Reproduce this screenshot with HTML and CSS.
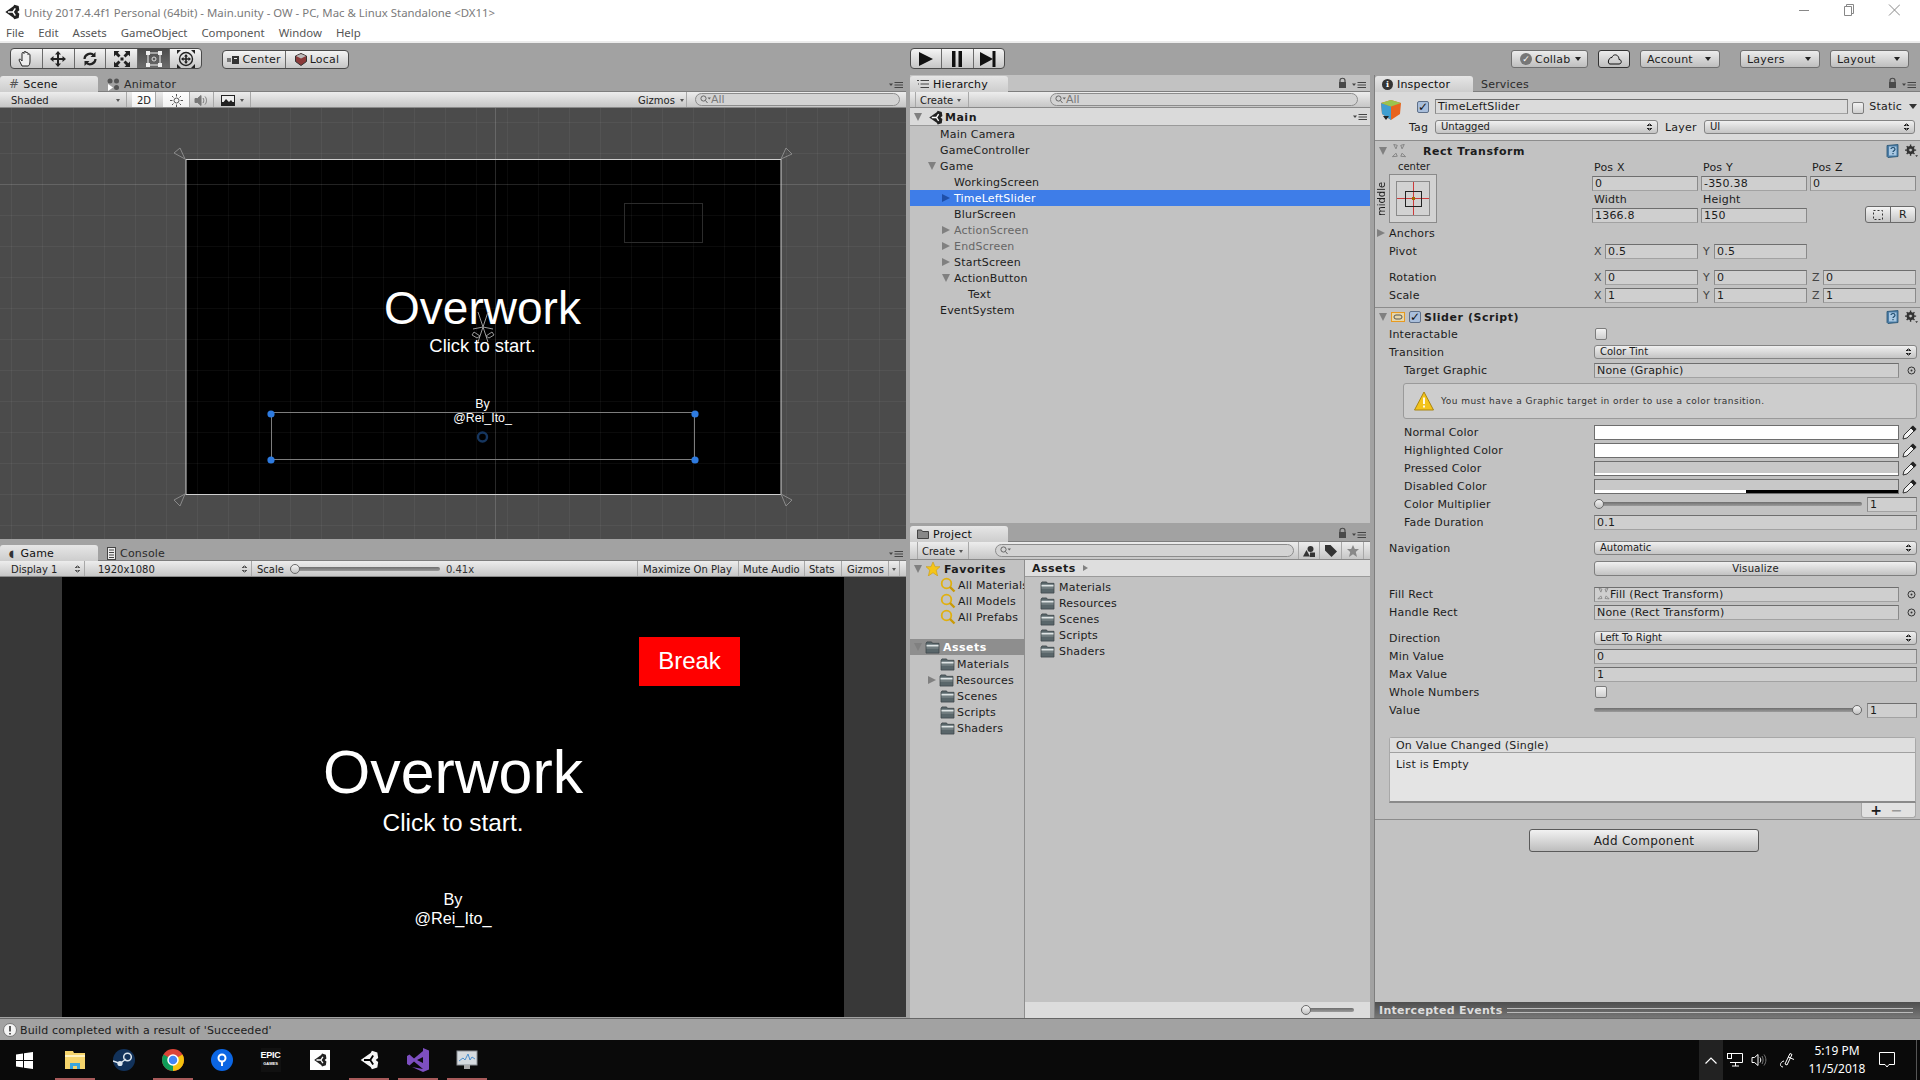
FILE: index.html
```html
<!DOCTYPE html>
<html lang="en">
<head>
    <meta charset="UTF-8">
    <title>Unity 2017.4.4f1 Personal (64bit) - Main.unity - OW</title>
    <link rel="stylesheet" href="styles.css">
</head>
<body>
<svg class="defs" width="0" height="0">
    <defs>
        <symbol id="unity" viewBox="0 0 24 24">
            <path d="M2 12 14 3.5 15.5 1 22 3 23 9.5 20 12 23 14.5 22 21 15.5 23 14 20.500z" fill="currentColor"/>
            <path d="M6 12H13.500L17 6.500M13.500 12 17 17.500" fill="none" stroke="#fff" stroke-width="2.200"/>
        </symbol>
        <symbol id="folder" viewBox="0 0 16 14">
            <path d="M1 2.500 2 1H7L8 2.500H15V13H1z" fill="#59666a" stroke="#3c4447" stroke-width=".8"/>
            <path d="M1.500 4H14.500V6H1.500z" fill="#dfe4e5"/>
            <path d="M1.500 7H14.500V8H1.500z" fill="#8c9699"/>
        </symbol>
        <symbol id="mag" viewBox="0 0 16 16">
            <circle cx="6.500" cy="6.500" r="4.800" fill="none" stroke="#e0b010" stroke-width="1.800"/>
            <path d="M10 10 14.500 14.500" stroke="#c99a08" stroke-width="2.400"/>
        </symbol>
        <symbol id="gear" viewBox="0 0 14 14">
            <circle cx="6" cy="6" r="3.200" fill="none" stroke="#333" stroke-width="2.200"/>
            <path d="M6 0V12M0 6H12M1.800 1.800 10.200 10.200M10.200 1.800 1.800 10.200" stroke="#333" stroke-width="1.500"/>
            <circle cx="6" cy="6" r="1.500" fill="#c2c2c2"/>
            <path d="M11 11.500H14L12.500 13.500z" fill="#333"/>
        </symbol>
        <symbol id="book" viewBox="0 0 14 14">
            <path d="M1 1.500 12 .5V12.500L2 13.500 1 12.500z" fill="#4d7ea8" stroke="#25506f" stroke-width=".8"/>
            <path d="M3 2.500H10.500V11.500H3z" fill="#a9c8e2"/>
            <path d="M5 5C5 3 9 3 9 5.200 9 6.800 7 6.500 7 8M7 9V10.300" fill="none" stroke="#1e4a6b" stroke-width="1.200"/>
        </symbol>
        <symbol id="rect-ico" viewBox="0 0 16 16">
            <g fill="none" stroke="#7d7d7d">
                <path d="M2 .5 6 1.500 4.500 5.500z"/>
                <path d="M14 .5 10 1.500 11.500 5.500z"/>
                <path d="M.5 14.500 4.500 10.500 6 14z"/>
                <path d="M15.500 14.500 11.500 10.500 10 14z"/>
            </g>
        </symbol>
        <symbol id="dropper" viewBox="0 0 15 15">
            <path d="M1 14 2 10 9 3 12 6 5 13z" fill="#f2f2f2" stroke="#333"/>
            <path d="M8.500 2.500 11 0.500 14.500 4 12.500 6.500z" fill="#222"/>
        </symbol>
        <symbol id="picker" viewBox="0 0 9 9">
            <circle cx="4.500" cy="4.500" r="3.500" fill="none" stroke="#333" stroke-width="1"/>
            <circle cx="4.500" cy="4.500" r="1" fill="#333"/>
        </symbol>
        <symbol id="lock" viewBox="0 0 9 12">
            <path d="M2 5V3.500C2 .5 7 .5 7 3.500V5" fill="none" stroke="#4a4a4a" stroke-width="1.200"/>
            <rect x="1" y="5" width="7" height="6" fill="#4a4a4a"/>
        </symbol>
        <symbol id="dock-menu" viewBox="0 0 14 8">
            <path d="M0 2.500H4L2 5z" fill="#444"/>
            <path d="M5.500 1.500H14M5.500 4H14M5.500 6.500H14" stroke="#444"/>
        </symbol>
        <symbol id="search" viewBox="0 0 11 9">
            <circle cx="3.500" cy="3.500" r="2.600" fill="none" stroke="#666"/>
            <path d="M5.500 5.500 7.500 8" stroke="#666"/>
            <path d="M7.500 2.500H11L9.250 4.500z" fill="#666"/>
        </symbol>
    </defs>
</svg>

<div class="titlebar">
    <svg class="title-logo" width="16" height="16"><use href="#unity"/></svg>
    <span class="title-text">Unity 2017.4.4f1 Personal (64bit) - Main.unity - OW - PC, Mac &amp; Linux Standalone &lt;DX11&gt;</span>
    <div class="win-controls">
        <svg width="101" height="12" viewBox="0 0 101 12" fill="none" stroke="#888">
            <path d="M0 6.500H10"/>
            <path d="M45.500 2.500H52.500V11.500H45.500zM47.500 2.500V.5H54.500V9.500H52.500"/>
            <path d="M90 .5 101 11.500M101 .5 90 11.500"/>
        </svg>
    </div>
</div>
<div class="menubar">
    <span>File</span><span>Edit</span><span>Assets</span><span>GameObject</span><span>Component</span><span>Window</span><span>Help</span>
</div>

<div class="toolbar">
    <div class="btn-group tools">
        <button class="tool">
            <svg width="18" height="18" viewBox="0 0 18 18" fill="#eee" stroke="#222"><path d="M5 16 2 10C2 8.500 4 9 5 11V3.500C5 2 7 2 7 3.500V2.500C7 1 9 1 9 2.500V3C9 2 11 2 11 3.500V4.500C11 3.500 13 3.500 13 5V11C13 14 12 16 11 16z"/></svg>
        </button>
        <button class="tool">
            <svg width="18" height="18" viewBox="0 0 18 18" fill="#222"><path d="M9 1 12 4.500H10V8H13.500V6L17 9 13.500 12V10H10V13.500H12L9 17 6 13.500H8V10H4.500V12L1 9 4.500 6V8H8V4.500H6z"/></svg>
        </button>
        <button class="tool">
            <svg width="18" height="18" viewBox="0 0 18 18" fill="none" stroke="#222" stroke-width="2.200"><path d="M3.500 9A5.500 5.500 0 0 1 13 5.500M14.500 9A5.500 5.500 0 0 1 5 12.500"/><path d="M14.500 2V7H9.500z" fill="#222" stroke="none"/><path d="M3.500 16V11H8.500z" fill="#222" stroke="none"/></svg>
        </button>
        <button class="tool">
            <svg width="18" height="18" viewBox="0 0 18 18" fill="#222"><path d="M1 1H6.500L4.800 2.700 7.500 5.500 5.500 7.500 2.700 4.800 1 6.500zM17 1V6.500L15.300 4.800 12.500 7.500 10.500 5.500 13.200 2.700 11.500 1zM1 17V11.500L2.700 13.200 5.500 10.500 7.500 12.500 4.800 15.300 6.500 17zM17 17H11.500L13.200 15.300 10.500 12.500 12.500 10.500 15.300 13.200 17 11.500z"/><rect x="7.500" y="7.500" width="3" height="3"/></svg>
        </button>
        <button class="tool active">
            <svg width="18" height="18" viewBox="0 0 18 18"><rect x="3" y="3" width="12" height="12" fill="none" stroke="#ddd" stroke-width="1.200"/><g fill="#eee"><rect x="1" y="1" width="4" height="4"/><rect x="13" y="1" width="4" height="4"/><rect x="1" y="13" width="4" height="4"/><rect x="13" y="13" width="4" height="4"/></g><circle cx="9" cy="9" r="2" fill="none" stroke="#ddd"/></svg>
        </button>
        <button class="tool">
            <svg width="20" height="20" viewBox="0 0 20 20" fill="#222"><path d="M1 5V1H5zM19 5V1H15zM1 15V19H5zM19 15V19H15z"/><circle cx="10" cy="10" r="6.500" fill="none" stroke="#222" stroke-width="1.400"/><path d="M10 5 12 7.500H10.800V9.200H12.500V8L15 10 12.500 12V10.800H10.800V12.500H12L10 15 8 12.500H9.200V10.800H7.500V12L5 10 7.500 8V9.200H9.200V7.500H8z"/></svg>
        </button>
    </div>
    <div class="btn-group pivot">
        <button class="tool-text">
            <svg width="12" height="8" viewBox="0 0 12 8"><rect x="0" y="2" width="4" height="4" fill="#777"/><rect x="5" y="0" width="7" height="8" fill="#333"/><rect x="7" y="2" width="3" height="1" fill="#eee"/></svg>
            Center
        </button>
        <button class="tool-text">
            <svg width="12" height="13" viewBox="0 0 12 13"><path d="M6 .5 11.500 3V8.500L6 12.500 .5 8.500V3z" fill="#8b3a3a" stroke="#333"/><path d="M1 3 6 5.500 11 3 6 1z" fill="#bbb"/></svg>
            Local
        </button>
    </div>
    <div class="btn-group play">
        <button class="play-btn"><svg width="16" height="16" viewBox="0 0 16 16"><path d="M1 1 15 8 1 15z" fill="#111"/></svg></button>
        <button class="play-btn"><svg width="12" height="16" viewBox="0 0 12 16" fill="#111"><rect x="1" width="3.500" height="16"/><rect x="7.500" width="3.500" height="16"/></svg></button>
        <button class="play-btn"><svg width="17" height="16" viewBox="0 0 17 16" fill="#111"><path d="M0 1 13 8 0 15z"/><rect x="12.500" width="3" height="16"/></svg></button>
    </div>
    <div class="toolbar-right">
        <button class="drop collab"><i class="collab-dot">&#10003;</i>Collab <i class="arrow"></i></button>
        <button class="drop cloud"><svg width="15" height="12" viewBox="0 0 15 12" fill="none" stroke="#111"><path d="M3 11H12C15 11 15 6.500 12 6.500 12 1 6 .5 5 4.500 1.500 4 0 11 3 11z"/></svg></button>
        <button class="drop account">Account<i class="arrow"></i></button>
        <button class="drop layers">Layers<i class="arrow"></i></button>
        <button class="drop layout">Layout<i class="arrow"></i></button>
    </div>
</div>

<div class="workspace">
    <div class="col col-views">
        <section class="panel scene-panel">
            <div class="tabs">
                <div class="tab"><span class="tab-glyph">#</span>Scene</div>
                <div class="tab off">
                    <svg width="13" height="13" viewBox="0 0 13 13" fill="#555"><circle cx="3" cy="3" r="2.500"/><circle cx="9.500" cy="3" r="2.500"/><circle cx="9.500" cy="9.500" r="2.500"/><path d="M1 6 6 9.500 1 13z" fill="#fff"/></svg>
                    Animator
                </div>
                <svg class="dock-menu" width="14" height="8"><use href="#dock-menu"/></svg>
            </div>
            <div class="strip">
                <div class="strip-item shaded">Shaded<i class="arrow small"></i></div>
                <div class="strip-item on two-d">2D</div>
                <div class="strip-item on light">
                    <svg width="13" height="13" viewBox="0 0 13 13" stroke="#555" fill="none"><circle cx="6.500" cy="6.500" r="2.500"/><path d="M6.500 0V2.500M6.500 10.500V13M0 6.500H2.500M10.500 6.500H13M2 2 3.500 3.500M9.500 9.500 11 11M11 2 9.500 3.500M3.500 9.500 2 11"/></svg>
                </div>
                <div class="strip-item audio">
                    <svg width="15" height="13" viewBox="0 0 15 13" fill="#777" stroke="#777"><path d="M1 4.500H3.500L7 1.500V11.500L3.500 8.500H1z"/><path d="M9 4C10 5.500 10 7.500 9 9M11 2.500C13 5 13 8 11 10.500" fill="none"/></svg>
                </div>
                <div class="strip-item image">
                    <svg width="14" height="11" viewBox="0 0 14 11"><rect width="14" height="11" fill="#222"/><rect x="1" y="1" width="12" height="6" fill="#eee"/><path d="M1 9 5 4 8 7 10 5 13 9z" fill="#222"/></svg>
                    <i class="arrow small"></i>
                </div>
                <div class="strip-space"></div>
                <div class="strip-item gizmos">Gizmos<i class="arrow small"></i></div>
                <div class="search scene-search"><svg width="11" height="9"><use href="#search"/></svg>All</div>
            </div>
            <div class="scene-view">
                <svg width="906" height="431" viewBox="0 108 906 431">
                    <defs>
                        <pattern id="grid" x="-20" y="91" width="31" height="31" patternUnits="userSpaceOnUse">
                            <path d="M.5 0V31M0 .5H31" stroke="#fff" stroke-opacity=".045" fill="none"/>
                        </pattern>
                    </defs>
                    <rect x="0" y="108" width="906" height="431" fill="#4b4b4b"/>
                    <rect x="186" y="159" width="595" height="335" fill="#000"/>
                    <rect x="0" y="108" width="906" height="431" fill="url(#grid)"/>
                    <path d="M495.500 108V539" stroke="#fff" stroke-opacity=".16"/>
                    <path d="M0 184.500H906" stroke="#fff" stroke-opacity=".1"/>
                    <rect x="186" y="159.500" width="595" height="335" fill="none" stroke="#cfcfcf"/>
                    <rect x="624.500" y="203.500" width="78" height="39" fill="none" stroke="#2c2c2c"/>
                    <g fill="none" stroke="#8a8a8a">
                        <path d="M185 159 174 153 180 148z"/>
                        <path d="M781 159 786 148 792 154z"/>
                        <path d="M185 494 174 500 180 506z"/>
                        <path d="M781 494 792 500 786 506z"/>
                    </g>
                    <text class="sv-title" x="482.500" y="324">Overwork</text>
                    <text class="sv-sub" x="482.500" y="352">Click to start.</text>
                    <text class="sv-by" x="482.500" y="408">By</text>
                    <text class="sv-by" x="482.500" y="422">@Rei_Ito_</text>
                    <g fill="none" stroke="#9a9a9a">
                        <path d="M478 312 483 327 488 312M478 342 483 327 488 342M473 329 483 327 493 329" />
                        <path d="M474 332 480 336 477 338 472 335zM492 332 486 336 489 338 494 335z"/>
                    </g>
                    <rect x="271.500" y="412.500" width="423" height="47" fill="none" stroke="#7d7d7d"/>
                    <circle cx="482.500" cy="437" r="4.500" fill="none" stroke="#16365f" stroke-width="2.400"/>
                    <g fill="#2e7be0">
                        <circle cx="271" cy="414" r="3.600"/>
                        <circle cx="695" cy="414" r="3.600"/>
                        <circle cx="271" cy="460" r="3.600"/>
                        <circle cx="695" cy="460" r="3.600"/>
                    </g>
                </svg>
            </div>
        </section>
        <section class="panel game-panel">
            <div class="tabs">
                <div class="tab game-tab"><span class="tab-glyph pac">&#9686;</span>Game</div>
                <div class="tab off">
                    <svg width="9" height="13" viewBox="0 0 9 13" fill="none" stroke="#444"><rect x=".5" y=".5" width="8" height="12" fill="#eee"/><path d="M2 3H7M2 5.500H7M2 8H7M2 10.500H7"/></svg>
                    Console
                </div>
                <svg class="dock-menu" width="14" height="8"><use href="#dock-menu"/></svg>
            </div>
            <div class="strip game-strip">
                <div class="strip-item display">Display 1<i class="updown"></i></div>
                <div class="strip-item res">1920x1080<i class="updown"></i></div>
                <div class="scale">
                    <span>Scale</span>
                    <div class="slider scale-slider"><i class="thumb start"></i></div>
                    <span class="scale-val">0.41x</span>
                </div>
                <div class="strip-item max-play">Maximize On Play</div>
                <div class="strip-item mute">Mute Audio</div>
                <div class="strip-item stats">Stats</div>
                <div class="strip-item game-giz">Gizmos</div>
                <div class="strip-item game-giz-arrow"><i class="arrow small"></i></div>
            </div>
            <div class="game-view">
                <div class="game-canvas">
                    <div class="g-title">Overwork</div>
                    <div class="g-sub">Click to start.</div>
                    <div class="g-by">By<br>@Rei_Ito_</div>
                    <div class="g-break">Break</div>
                </div>
            </div>
        </section>
    </div>

    <div class="col col-mid">
        <section class="panel hierarchy">
            <div class="tabs">
                <div class="tab wide">
                    <svg width="12" height="10" viewBox="0 0 12 10" stroke="#444"><path d="M3.500 1.500H12M3.500 5H12M3.500 8.500H12M0 1.500H2M1 5H2"/></svg>
                    Hierarchy
                </div>
                <svg class="lock" width="9" height="12"><use href="#lock"/></svg>
                <svg class="dock-menu near" width="14" height="8"><use href="#dock-menu"/></svg>
            </div>
            <div class="strip">
                <div class="strip-item create">Create<i class="arrow small"></i></div>
                <div class="search hier-search"><svg width="11" height="9"><use href="#search"/></svg>All</div>
            </div>
            <div class="scene-head">
                <i class="tri-d"></i>
                <svg class="scene-logo" width="15" height="15"><use href="#unity"/></svg>
                <b>Main</b>
                <svg class="dock-menu head" width="14" height="8"><use href="#dock-menu"/></svg>
            </div>
            <div class="tree">
                <div class="row d0">Main Camera</div>
                <div class="row d0">GameController</div>
                <div class="row d0"><i class="tri-d"></i>Game</div>
                <div class="row d1">WorkingScreen</div>
                <div class="row d1 selected"><i class="tri-r"></i>TimeLeftSlider</div>
                <div class="row d1">BlurScreen</div>
                <div class="row d1 dim"><i class="tri-r"></i>ActionScreen</div>
                <div class="row d1 dim"><i class="tri-r"></i>EndScreen</div>
                <div class="row d1"><i class="tri-r"></i>StartScreen</div>
                <div class="row d1"><i class="tri-d"></i>ActionButton</div>
                <div class="row d2">Text</div>
                <div class="row d0">EventSystem</div>
            </div>
        </section>
        <section class="panel project">
            <div class="tabs">
                <div class="tab wide">
                    <svg width="12" height="10" viewBox="0 0 12 10" fill="#888" stroke="#444"><path d="M.5 1H4.500L5.500 2.500H11.500V9.500H.5z"/></svg>
                    Project
                </div>
                <svg class="lock" width="9" height="12"><use href="#lock"/></svg>
                <svg class="dock-menu near" width="14" height="8"><use href="#dock-menu"/></svg>
            </div>
            <div class="strip project-strip">
                <div class="strip-item create">Create<i class="arrow small"></i></div>
                <div class="search proj-search"><svg width="11" height="9"><use href="#search"/></svg></div>
                <div class="strip-item icon-cell">
                    <svg width="12" height="11" viewBox="0 0 12 11" fill="#333"><circle cx="7.500" cy="3" r="3"/><path d="M3.500 4 7 10.500H0z"/><rect x="7" y="6.500" width="5" height="4.500"/></svg>
                </div>
                <div class="strip-item icon-cell">
                    <svg width="12" height="12" viewBox="0 0 12 12" fill="#333"><path d="M0 0H5.500L12 6.500 6.500 12 0 5.500z"/></svg>
                </div>
                <div class="strip-item icon-cell">
                    <svg width="12" height="12" viewBox="0 0 12 12" fill="#888"><path d="M6 0 7.800 4H12L8.800 7 10 12 6 9.200 2 12 3.200 7 0 4H4.200z"/></svg>
                </div>
            </div>
            <div class="project-body">
                <div class="proj-tree">
                    <div class="row p-head fav"><i class="tri-d"></i>
                        <svg width="14" height="14" viewBox="0 0 12 12"><path d="M6 0 7.800 4H12L8.800 7 10 12 6 9.200 2 12 3.200 7 0 4H4.200z" fill="#f5c518" stroke="#c89a10" stroke-width=".5"/></svg>
                        <b>Favorites</b></div>
                    <div class="row p-item"><svg width="16" height="16"><use href="#mag"/></svg>All Materials</div>
                    <div class="row p-item"><svg width="16" height="16"><use href="#mag"/></svg>All Models</div>
                    <div class="row p-item"><svg width="16" height="16"><use href="#mag"/></svg>All Prefabs</div>
                    <div class="row p-head assets-sel"><i class="tri-d"></i>
                        <svg width="15" height="13"><use href="#folder"/></svg>
                        <b>Assets</b></div>
                    <div class="row p-item"><svg width="15" height="13"><use href="#folder"/></svg>Materials</div>
                    <div class="row p-item"><i class="tri-r"></i><svg width="15" height="13"><use href="#folder"/></svg>Resources</div>
                    <div class="row p-item"><svg width="15" height="13"><use href="#folder"/></svg>Scenes</div>
                    <div class="row p-item"><svg width="15" height="13"><use href="#folder"/></svg>Scripts</div>
                    <div class="row p-item"><svg width="15" height="13"><use href="#folder"/></svg>Shaders</div>
                </div>
                <div class="proj-files">
                    <div class="crumbs"><b>Assets</b><i class="tri-r tiny"></i></div>
                    <div class="files">
                        <div class="row file"><svg width="15" height="13"><use href="#folder"/></svg>Materials</div>
                        <div class="row file"><svg width="15" height="13"><use href="#folder"/></svg>Resources</div>
                        <div class="row file"><svg width="15" height="13"><use href="#folder"/></svg>Scenes</div>
                        <div class="row file"><svg width="15" height="13"><use href="#folder"/></svg>Scripts</div>
                        <div class="row file"><svg width="15" height="13"><use href="#folder"/></svg>Shaders</div>
                    </div>
                    <div class="files-foot"><div class="slider foot-slider"><i class="thumb start"></i></div></div>
                </div>
            </div>
        </section>
    </div>

    <div class="col col-insp">
        <section class="panel inspector">
            <div class="tabs">
                <div class="tab wide">
                    <span class="info-dot">i</span>
                    Inspector
                </div>
                <div class="tab off services">Services</div>
                <svg class="lock" width="9" height="12"><use href="#lock"/></svg>
                <svg class="dock-menu near" width="14" height="8"><use href="#dock-menu"/></svg>
            </div>
            <div class="insp-head">
                <div class="head-row1">
                    <svg class="cube" width="22" height="22" viewBox="0 0 22 22">
                        <path d="M11 1 21 4 20 15 11 21 2 15 1 4z" fill="#e8631e"/>
                        <path d="M1 4 11 7.500 11 21 2 15z" fill="#3f9ed0"/>
                        <path d="M1 4 11 1 21 4 11 7.500z" fill="#9ac44e"/>
                        <path d="M3 17H9L6 21z" fill="#222"/>
                    </svg>
                    <label class="check on">&#10003;</label>
                    <div class="field name">TimeLeftSlider</div>
                    <label class="check static-check"></label>
                    <span class="static">Static</span>
                    <i class="tri-d dark"></i>
                </div>
                <div class="head-row2">
                    <span class="tag-label">Tag</span>
                    <div class="pop tag-pop">Untagged</div>
                    <span class="layer-label">Layer</span>
                    <div class="pop layer-pop">UI</div>
                </div>
            </div>

            <div class="comp-title rect-title">
                <i class="tri-d"></i>
                <svg class="comp-ico" width="16" height="14"><use href="#rect-ico"/></svg>
                <b class="rect-name">Rect Transform</b>
                <svg class="book" width="14" height="14"><use href="#book"/></svg>
                <svg class="gear" width="13" height="14"><use href="#gear"/></svg>
            </div>
            <div class="rt-top">
                <div class="anchor">
                    <div class="anchor-middle">middle</div>
                    <div class="anchor-col">
                        <div class="anchor-center">center</div>
                        <div class="anchor-box">
                            <svg width="46" height="47" viewBox="0 0 46 47">
                                <rect x="6.500" y="6.500" width="33" height="34" fill="none" stroke="#8a8a8a"/>
                                <path d="M7 23.500H39M23.500 7V40" stroke="#cc3a3a"/>
                                <rect x="15.500" y="16.500" width="16" height="15" fill="none" stroke="#222"/>
                                <rect x="22" y="22" width="3" height="3" fill="#a06a00"/>
                            </svg>
                        </div>
                    </div>
                </div>
                <div class="rt-grid">
                    <span>Pos X</span><span>Pos Y</span><span>Pos Z</span>
                    <div class="field">0</div><div class="field">-350.38</div><div class="field">0</div>
                    <span>Width</span><span>Height</span><span></span>
                    <div class="field">1366.8</div><div class="field">150</div>
                    <div class="btn-group rt-btns">
                        <button class="rt-btn"><svg width="10" height="10" viewBox="0 0 10 10" fill="none" stroke="#333" stroke-dasharray="2 2"><rect x=".5" y=".5" width="9" height="9"/></svg></button>
                        <button class="rt-btn">R</button>
                    </div>
                </div>
            </div>
            <div class="prop foldable"><span class="prop-label"><i class="tri-r"></i>Anchors</span></div>
            <div class="prop">
                <span class="prop-label">Pivot</span>
                <div class="vec">
                    <div class="axis"><span>X</span><div class="field">0.5</div></div>
                    <div class="axis"><span>Y</span><div class="field">0.5</div></div>
                </div>
            </div>
            <div class="prop gap">
                <span class="prop-label">Rotation</span>
                <div class="vec">
                    <div class="axis"><span>X</span><div class="field">0</div></div>
                    <div class="axis"><span>Y</span><div class="field">0</div></div>
                    <div class="axis"><span>Z</span><div class="field">0</div></div>
                </div>
            </div>
            <div class="prop">
                <span class="prop-label">Scale</span>
                <div class="vec">
                    <div class="axis"><span>X</span><div class="field">1</div></div>
                    <div class="axis"><span>Y</span><div class="field">1</div></div>
                    <div class="axis"><span>Z</span><div class="field">1</div></div>
                </div>
            </div>

            <div class="comp-title slider-title">
                <i class="tri-d"></i>
                <svg class="script-ico" width="14" height="10" viewBox="0 0 14 10"><rect x=".5" y=".5" width="13" height="9" fill="#e8d7a8" stroke="#e89a20"/><rect x="3" y="3" width="8" height="4" rx="2" fill="none" stroke="#555"/></svg>
                <label class="check on">&#10003;</label>
                <b>Slider (Script)</b>
                <svg class="book" width="14" height="14"><use href="#book"/></svg>
                <svg class="gear" width="13" height="14"><use href="#gear"/></svg>
            </div>
            <div class="prop"><span class="prop-label">Interactable</span><label class="check"></label></div>
            <div class="prop"><span class="prop-label">Transition</span><div class="pop">Color Tint</div></div>
            <div class="prop nested"><span class="prop-label">Target Graphic</span>
                <div class="obj"><div class="field">None (Graphic)</div><svg width="9" height="9"><use href="#picker"/></svg></div>
            </div>
            <div class="help-box">
                <svg width="20" height="20" viewBox="0 0 20 20"><path d="M10 1 19.500 19H.5z" fill="#f3c31a" stroke="#a98510"/><path d="M10 6.500V13M10 14.500V16.500" stroke="#fff" stroke-width="1.800"/></svg>
                <span>You must have a Graphic target in order to use a color transition.</span>
            </div>
            <div class="prop nested"><span class="prop-label">Normal Color</span>
                <div class="obj"><div class="swatch white"></div><svg class="dropper" width="15" height="15"><use href="#dropper"/></svg></div></div>
            <div class="prop nested"><span class="prop-label">Highlighted Color</span>
                <div class="obj"><div class="swatch white"></div><svg class="dropper" width="15" height="15"><use href="#dropper"/></svg></div></div>
            <div class="prop nested"><span class="prop-label">Pressed Color</span>
                <div class="obj"><div class="swatch pressed"></div><svg class="dropper" width="15" height="15"><use href="#dropper"/></svg></div></div>
            <div class="prop nested"><span class="prop-label">Disabled Color</span>
                <div class="obj"><div class="swatch disabled"></div><svg class="dropper" width="15" height="15"><use href="#dropper"/></svg></div></div>
            <div class="prop nested"><span class="prop-label">Color Multiplier</span>
                <div class="slider-wrap"><div class="slider"><i class="thumb start"></i></div><div class="field num">1</div></div></div>
            <div class="prop nested"><span class="prop-label">Fade Duration</span><div class="field">0.1</div></div>

            <div class="prop gap"><span class="prop-label">Navigation</span><div class="pop">Automatic</div></div>
            <div class="prop visualize"><span></span><button class="btn-plain">Visualize</button></div>

            <div class="prop"><span class="prop-label">Fill Rect</span>
                <div class="obj"><div class="field with-ico"><svg width="13" height="12"><use href="#rect-ico"/></svg>Fill (Rect Transform)</div><svg width="9" height="9"><use href="#picker"/></svg></div></div>
            <div class="prop"><span class="prop-label">Handle Rect</span>
                <div class="obj"><div class="field">None (Rect Transform)</div><svg width="9" height="9"><use href="#picker"/></svg></div></div>

            <div class="prop gap"><span class="prop-label">Direction</span><div class="pop">Left To Right</div></div>
            <div class="prop"><span class="prop-label">Min Value</span><div class="field">0</div></div>
            <div class="prop"><span class="prop-label">Max Value</span><div class="field">1</div></div>
            <div class="prop"><span class="prop-label">Whole Numbers</span><label class="check"></label></div>
            <div class="prop"><span class="prop-label">Value</span>
                <div class="slider-wrap"><div class="slider"><i class="thumb end"></i></div><div class="field num">1</div></div></div>

            <div class="event-box">
                <div class="event-head">On Value Changed (Single)</div>
                <div class="event-body">List is Empty</div>
            </div>
            <div class="event-foot"><span class="plus">+</span><span class="minus">&minus;</span></div>
            <div class="add-wrap"><button class="add-comp">Add Component</button></div>
            <div class="intercepted"><b>Intercepted Events</b><i class="rule"></i></div>
        </section>
    </div>
</div>

<div class="statusbar">
    <svg width="14" height="14" viewBox="0 0 14 14"><circle cx="7" cy="7" r="6.500" fill="#f4f4f4" stroke="#777"/><path d="M7 3V8.500M7 10V11.500" stroke="#333" stroke-width="1.600"/></svg>
    Build completed with a result of 'Succeeded'
</div>

<div class="taskbar">
    <div class="tb-app start">
        <svg width="17" height="17" viewBox="0 0 17 17" fill="#fff"><path d="M0 2.500 7 1.500V8H0zM8 1.300 17 0V8H8zM0 9H7V15.500L0 14.500zM8 9H17V17L8 15.700z"/></svg>
    </div>
    <div class="tb-app on">
        <svg width="22" height="20" viewBox="0 0 22 20"><path d="M1 1H9L10 3H21V19H1z" fill="#f6d56c"/><path d="M1 5H21V7H1z" fill="#fff3c0"/><path d="M6 13H16V19H13V16H9V19H6z" fill="#3aa6dd"/></svg>
    </div>
    <div class="tb-app">
        <svg width="22" height="22" viewBox="0 0 22 22"><circle cx="11" cy="11" r="11" fill="#12325a"/><circle cx="14.500" cy="8" r="3.800" fill="none" stroke="#dde6ee" stroke-width="1.500"/><circle cx="7" cy="14.500" r="2.600" fill="#dde6ee"/><path d="M0 12 7 14.500 13 10" stroke="#dde6ee" stroke-width="1.400" fill="none"/></svg>
    </div>
    <div class="tb-app on">
        <svg width="22" height="22" viewBox="0 0 22 22"><circle cx="11" cy="11" r="11" fill="#db4437"/><path d="M11 11 20.500 5.500A11 11 0 0 1 11 22z" fill="#f4c20d"/><path d="M11 11 11 22A11 11 0 0 1 1.500 5.500z" fill="#0f9d58"/><circle cx="11" cy="11" r="5" fill="#4285f4" stroke="#fff" stroke-width="1.500"/></svg>
    </div>
    <div class="tb-app">
        <svg width="22" height="22" viewBox="0 0 22 22"><circle cx="11" cy="11" r="11" fill="#0b66e4"/><circle cx="11" cy="9" r="3.500" fill="none" stroke="#fff" stroke-width="2"/><path d="M11 12.500V17" stroke="#fff" stroke-width="2"/></svg>
    </div>
    <div class="tb-app">
        <div class="epic">EPIC<small>GAMES</small></div>
    </div>
    <div class="tb-app">
        <div class="unity-tile"><svg width="14" height="14"><use href="#unity"/></svg></div>
    </div>
    <div class="tb-app on unity-dark">
        <svg width="20" height="20"><use href="#unity"/></svg>
    </div>
    <div class="tb-app on">
        <svg width="24" height="24" viewBox="0 0 24 24" fill="#7d4fc0"><path d="M17 0 23 2.500V21.500L17 24 6 19 17 21zM1 8 3.500 6.500 8 10.500 17 3V9L11 12 17 15V21L8 13.500 3.500 17.500 1 16z"/></svg>
    </div>
    <div class="tb-app on">
        <svg width="22" height="22" viewBox="0 0 22 22"><rect x="1" y="2" width="20" height="14" fill="#d6dbdf" stroke="#8b9096"/><path d="M3 12 7 9 9 11 12 5 14 11 16 8 19 10" fill="none" stroke="#4a8fd0"/><path d="M8 16H14V20H8z" fill="#aaa"/></svg>
    </div>
    <div class="tray">
        <div class="tray-up"><svg width="12" height="7" viewBox="0 0 12 7" fill="none" stroke="#fff" stroke-width="1.200"><path d="M.5 6.500 6 1 11.500 6.500"/></svg></div>
        <svg class="tray-net" width="16" height="14" viewBox="0 0 16 14" fill="none" stroke="#fff"><path d="M3 .5H15.500V9.500H3M8.500 9.500V13M5 13H12"/><rect x=".5" y=".5" width="4" height="5" fill="#0a0a0a"/></svg>
        <svg class="tray-vol" width="16" height="14" viewBox="0 0 16 14" fill="none" stroke="#fff"><path d="M1 4.500H3.500L7 1.500V12.500L3.500 9.500H1z"/><path d="M9 4.500C10 6 10 8 9 9.500"/><path d="M11 3C12.500 5.500 12.500 8.500 11 11M13 1.500C15.500 5 15.500 9 13 12.500" stroke="#777"/></svg>
        <svg class="tray-pen" width="16" height="16" viewBox="0 0 16 16" fill="none" stroke="#fff"><path d="M6 12 11 1.500 13 2.500 8 13zM9 5 15 7.500M5 9C.5 10 .5 15 4 15"/></svg>
        <div class="clock"><span>5:19 PM</span><span>11/5/2018</span></div>
        <svg class="tray-note" width="16" height="16" viewBox="0 0 16 16" fill="none" stroke="#fff"><path d="M.5 .5H15.500V12.500H10L8 15 6 12.500H.5z"/></svg>
        <i class="show-desktop"></i>
    </div>
</div>
</body>
</html>
```

FILE: styles.css
```css
* {
    box-sizing: border-box;
    margin: 0;
    padding: 0;
}

html, body {
    width: 1920px;
    height: 1080px;
    overflow: hidden;
}

body {
    font-family: "DejaVu Sans", sans-serif;
    font-size: 11px;
    letter-spacing: .2px;
    color: #1c1c1c;
    background: #a2a2a2;
}

button {
    font-family: inherit;
    font-size: 11px;
    letter-spacing: inherit;
    color: inherit;
}

.defs {
    display: block;
    height: 0;
}

/* window chrome */
.titlebar {
    height: 22px;
    background: #fff;
    display: flex;
    align-items: center;
    padding: 2px 0 0 4px;
    font-family: "Noto Sans", sans-serif;
    font-size: 11.400px;
    letter-spacing: 0;
    color: #7a7a7a;
}

.title-logo {
    color: #222;
    margin-right: 4px;
}

.win-controls {
    margin-left: auto;
    margin-right: 20px;
    margin-top: -2px;
}

.menubar {
    height: 21px;
    background: #fff;
    border-bottom: 2px solid #ececec;
    display: flex;
    align-items: center;
    gap: 14px;
    padding: 1px 0 0 6px;
    font-family: "Noto Sans", sans-serif;
    font-size: 11.400px;
    letter-spacing: 0;
    color: #555;
}

.toolbar {
    height: 32px;
    background: #a2a2a2;
    display: flex;
    align-items: flex-start;
    padding: 5px 11px 0 10px;
}

.btn-group {
    display: flex;
    border: 1px solid #4a4a4a;
    border-radius: 4px;
    overflow: hidden;
    background: linear-gradient(#f4f4f4, #c6c6c6);
}

.tools {
    height: 21px;
    width: 192px;
}

.tool {
    flex: 1;
    border: 0;
    border-right: 1px solid #6a6a6a;
    background: none;
    display: flex;
    align-items: center;
    justify-content: center;
}

.tool:last-child {
    border-right: 0;
}

.tool.active {
    background: linear-gradient(#4c4c4c, #6b6b6b);
}

.pivot {
    height: 19px;
    margin: 2px 0 0 20px;
    width: 127px;
}

.tool-text {
    flex: 1;
    border: 0;
    border-right: 1px solid #6a6a6a;
    background: none;
    display: flex;
    align-items: center;
    justify-content: center;
    gap: 3px;
}

.tool-text:last-child {
    border-right: 0;
}

.play {
    height: 21px;
    width: 95px;
    margin-left: 561px;
}

.play-btn {
    flex: 1;
    border: 0;
    border-right: 1px solid #6a6a6a;
    background: none;
    display: flex;
    align-items: center;
    justify-content: center;
}

.play-btn:last-child {
    border-right: 0;
}

.toolbar-right {
    margin-left: auto;
    display: flex;
    padding-top: 2px;
}

.drop {
    height: 18px;
    background: linear-gradient(#ececec, #bebebe);
    border: 1px solid #6f6f6f;
    border-radius: 3px;
    display: flex;
    align-items: center;
    padding: 0 0 0 6px;
    position: relative;
}

.collab {
    width: 77px;
    padding-left: 8px;
}

.collab-dot {
    width: 12px;
    height: 12px;
    border-radius: 50%;
    background: #777;
    color: #fff;
    font: 700 9px/12px "DejaVu Sans", sans-serif;
    text-align: center;
    margin-right: 3px;
}

.cloud {
    width: 32px;
    margin-left: 10px;
    border-color: #333;
    justify-content: center;
    padding: 0;
}

.account {
    width: 80px;
    margin-left: 10px;
}

.layers {
    width: 80px;
    margin-left: 20px;
}

.layout {
    width: 79px;
    margin-left: 10px;
}

.arrow {
    display: inline-block;
    width: 0;
    height: 0;
    margin-left: auto;
    margin-right: 8px;
    border-left: 3px solid transparent;
    border-right: 3px solid transparent;
    border-top: 4px solid #222;
}

.collab .arrow {
    margin-left: 5px;
    margin-right: 0;
}

.arrow.small {
    border-left-width: 2px;
    border-right-width: 2px;
    border-top: 3px solid #555;
}

/* dock layout */
.workspace {
    height: 943px;
    display: grid;
    grid-template-columns: 906px 460px 546px;
    column-gap: 4px;
}

.col {
    display: flex;
    flex-direction: column;
    min-width: 0;
}

.panel {
    display: flex;
    flex-direction: column;
    min-height: 0;
}

.tabs {
    height: 17px;
    display: flex;
    align-items: flex-end;
    border-bottom: 1px solid #7e7e7e;
    padding-top: 1px;
    flex-shrink: 0;
}

.tab {
    width: 98px;
    height: 16px;
    margin-bottom: -1px;
    background: linear-gradient(#e6e6e6, #cdcdcd);
    border-radius: 3px 3px 0 0;
    display: flex;
    align-items: center;
    gap: 4px;
    padding-left: 9px;
    color: #111;
}

.tab.off {
    background: none;
    width: auto;
    padding-left: 9px;
    color: #2a2a2a;
}

.tab-glyph {
    font-size: 12px;
    color: #555;
}

.tab-glyph.pac {
    color: #333;
    font-size: 10px;
}

.game-tab {
    gap: 6px;
}

.tabs .lock {
    margin: 0 5px 2px auto;
}

.dock-menu {
    margin: 0 3px 2px auto;
    flex-shrink: 0;
}

.dock-menu.near {
    margin-left: 0;
    margin-right: 4px;
}

.strip {
    height: 16px;
    display: flex;
    align-items: stretch;
    background: linear-gradient(#ededed, #c6c6c6);
    border-bottom: 1px solid #8a8a8a;
    font-size: 10px;
    letter-spacing: 0;
    flex-shrink: 0;
}

.strip-item {
    display: flex;
    align-items: center;
    border-right: 1px solid #a8a8a8;
    color: #222;
    padding-top: 1px;
}

.strip-space {
    flex: 1;
}

.shaded {
    width: 127px;
    padding-left: 11px;
}

.shaded .arrow {
    margin-right: 6px;
}

.two-d {
    width: 24px;
    padding-left: 5px;
    margin-left: 5px;
    background: linear-gradient(#fff, #f1f1f1);
}

.light {
    width: 27px;
    margin-left: 7px;
    justify-content: center;
    background: linear-gradient(#fff, #f1f1f1);
}

.audio {
    width: 24px;
    justify-content: center;
}

.image {
    width: 37px;
    padding-left: 7px;
}

.image .arrow {
    margin-left: 5px;
    margin-right: 0;
}

.gizmos {
    width: 49px;
}

.gizmos .arrow {
    margin-left: 5px;
    margin-right: 0;
}

.search {
    height: 13px;
    margin-top: 1px;
    border: 1px solid #8c8c8c;
    border-radius: 7px;
    background: #d3d3d3;
    display: flex;
    align-items: center;
    padding-left: 4px;
    color: #7a7a7a;
    font-size: 11px;
}

.scene-search {
    width: 205px;
    margin: 1px 6px 0 8px;
}

/* scene view */
.scene-panel {
    height: 465px;
}

.scene-view {
    height: 431px;
    background: #4b4b4b;
    flex-shrink: 0;
}

.scene-view svg {
    display: block;
}

.scene-view text {
    font-family: "Liberation Sans", sans-serif;
    fill: #fff;
    text-anchor: middle;
    letter-spacing: 0;
}

.sv-title {
    font-size: 46px;
}

.sv-sub {
    font-size: 18.400px;
}

.sv-by {
    font-size: 12.400px;
}

/* game view */
.game-panel {
    margin-top: 4px;
    height: 473px;
}

.display {
    width: 85px;
    padding-left: 11px;
    position: relative;
}

.res {
    width: 167px;
    padding-left: 13px;
}

.updown {
    margin-left: auto;
    margin-right: 4px;
    width: 5px;
    height: 8px;
    background:
        linear-gradient(135deg, transparent 50%, #555 50%) 0 0 / 2.500px 3px no-repeat,
        linear-gradient(225deg, transparent 50%, #555 50%) 2.500px 0 / 2.500px 3px no-repeat,
        linear-gradient(45deg, transparent 50%, #555 50%) 0 5px / 2.500px 3px no-repeat,
        linear-gradient(315deg, transparent 50%, #555 50%) 2.500px 5px / 2.500px 3px no-repeat;
}

.game-strip {
    padding-right: 6px;
}

.scale {
    flex: 1;
    display: flex;
    align-items: center;
    padding: 1px 0 0 5px;
    border-right: 1px solid #a8a8a8;
}

.scale-val {
    color: #333;
    margin-left: 6px;
}

.slider {
    flex: 1;
    height: 4px;
    border-radius: 2px;
    background: linear-gradient(#6e6e6e, #9b9b9b);
    position: relative;
}

.scale-slider {
    flex: none;
    width: 150px;
    margin-left: 6px;
}

.thumb {
    position: absolute;
    top: -3px;
    width: 10px;
    height: 10px;
    border-radius: 50%;
    background: linear-gradient(#f4f4f4, #c2c2c2);
    border: 1px solid #6a6a6a;
}

.thumb.start {
    left: 0;
}

.thumb.end {
    right: 0;
}

.max-play {
    width: 101px;
    padding-left: 5px;
}

.mute {
    width: 66px;
    padding-left: 4px;
}

.stats {
    width: 37px;
    padding-left: 4px;
}

.game-giz {
    width: 47px;
    padding-left: 5px;
}

.game-giz-arrow {
    width: 11px;
    justify-content: center;
}

.game-giz-arrow .arrow {
    margin: 0;
}

.game-view {
    height: 440px;
    background: #383838;
    padding-left: 62px;
    flex-shrink: 0;
}

.game-canvas {
    width: 782px;
    height: 440px;
    background: #000;
    color: #fff;
    font-family: "Liberation Sans", sans-serif;
    letter-spacing: 0;
    text-align: center;
    padding-top: 155px;
    position: relative;
}

.g-title {
    font-size: 60.800px;
    line-height: 80px;
}

.g-sub {
    font-size: 24.400px;
    line-height: 30px;
    margin-top: -4px;
}

.g-by {
    font-size: 16.300px;
    line-height: 19px;
    margin-top: 52px;
}

.g-break {
    position: absolute;
    left: 577px;
    top: 60px;
    width: 101px;
    height: 49px;
    background: #f00;
    font-size: 24px;
    line-height: 47px;
}

/* hierarchy */
.col-mid .tab.wide {
    gap: 4px;
    padding-left: 7px;
}

.hierarchy {
    height: 448px;
    background: #c2c2c2;
}

.create {
    width: 54px;
    margin-left: 5px;
    border-left: 1px solid #a8a8a8;
    padding-left: 4px;
}

.create .arrow {
    margin-left: 4px;
    margin-right: 0;
}

.hier-search {
    width: 308px;
    margin-left: 81px;
}

.scene-head {
    height: 18px;
    background: #dadada;
    border-bottom: 1px solid #9a9a9a;
    display: flex;
    align-items: center;
    padding: 1px 0 0 4px;
    flex-shrink: 0;
}

.scene-logo {
    color: #222;
    margin: 0 2px 0 6px;
}

.scene-head b {
    letter-spacing: .5px;
}

.dock-menu.head {
    margin: 0 3px 0 auto;
}

.tri-d {
    display: inline-block;
    width: 0;
    height: 0;
    border-left: 4px solid transparent;
    border-right: 4px solid transparent;
    border-top: 8px solid #808080;
    flex-shrink: 0;
}

.tri-r {
    display: inline-block;
    width: 0;
    height: 0;
    border-top: 4px solid transparent;
    border-bottom: 4px solid transparent;
    border-left: 8px solid #808080;
    flex-shrink: 0;
}

.tri-d.dark {
    border-top-color: #333;
    border-top-width: 5px;
    margin-left: 7px;
}

.tri-r.tiny {
    border-top-width: 3px;
    border-bottom-width: 3px;
    border-left-width: 5px;
    margin-left: 7px;
}

.row {
    height: 16px;
    display: flex;
    align-items: center;
    white-space: nowrap;
}

.row svg {
    flex-shrink: 0;
}

.tree .row .tri-d,
.tree .row .tri-r {
    margin-left: -12px;
    margin-right: 4px;
}

.d0 {
    padding-left: 30px;
}

.d1 {
    padding-left: 44px;
}

.d2 {
    padding-left: 58px;
}

.row.selected {
    background: #3e7de8;
    color: #fff;
}

.row.selected .tri-r {
    border-left-color: #1f4fa8;
}

.row.dim {
    color: #666;
}

/* project */
.project {
    margin-top: 2px;
    flex: 1;
    min-height: 0;
}

.project-strip {
    height: 18px;
}

.project-strip .create {
    margin-left: 7px;
    width: 52px;
}

.proj-search {
    width: 299px;
    margin: 2px 4px 0 26px;
}

.icon-cell {
    width: 22px;
    border-right: 1px solid #a8a8a8;
    justify-content: center;
}

.icon-cell:nth-of-type(3) {
    border-left: 1px solid #a8a8a8;
}

.project-body {
    flex: 1;
    display: flex;
    background: #c2c2c2;
    min-height: 0;
}

.proj-tree {
    width: 115px;
    border-right: 1px solid #8e8e8e;
    padding-top: 1px;
    overflow: hidden;
    flex-shrink: 0;
}

.p-head {
    padding-left: 4px;
    gap: 3px;
}

.p-head.fav {
    gap: 4px;
}

.p-head b {
    letter-spacing: .5px;
}

.p-item {
    padding-left: 30px;
    gap: 2px;
}

.p-item .tri-r {
    margin-left: -12px;
    margin-right: 1px;
}

.assets-sel {
    margin: 14px 0 1px;
    background: #8e8e8e;
}

.assets-sel b {
    color: #fff;
}

.proj-files {
    flex: 1;
    display: flex;
    flex-direction: column;
    min-width: 0;
}

.crumbs {
    height: 17px;
    background: #dedede;
    border-bottom: 1px solid #9a9a9a;
    display: flex;
    align-items: center;
    padding-left: 7px;
}

.crumbs b {
    letter-spacing: .5px;
}

.files {
    flex: 1;
    padding-top: 2px;
}

.file {
    padding-left: 15px;
    gap: 4px;
}

.files-foot {
    height: 16px;
    background: #dcdcdc;
    display: flex;
    align-items: center;
    justify-content: flex-end;
    padding-right: 16px;
}

.foot-slider {
    flex: none;
    width: 53px;
}

/* inspector */
.inspector {
    height: 943px;
    background: #c2c2c2;
    border-left: 1px solid #7e7e7e;
}

.inspector > .tabs {
    background: #a2a2a2;
}

.inspector .tab.wide {
    gap: 4px;
    padding-left: 7px;
}

.info-dot {
    width: 11px;
    height: 11px;
    border-radius: 50%;
    background: #333;
    color: #fff;
    font: 700 8px/11px "DejaVu Serif", serif;
    text-align: center;
}

.tab.off.services {
    padding-left: 8px;
}

.insp-head {
    height: 48px;
    background: #dadada;
    flex-shrink: 0;
}

.head-row1 {
    display: flex;
    align-items: flex-start;
    padding: 7px 3px 0 5px;
    height: 28px;
}

.cube {
    flex-shrink: 0;
}

.check {
    width: 12px;
    height: 12px;
    flex-shrink: 0;
    border: 1px solid #7c7c7c;
    border-radius: 2px;
    background: linear-gradient(#f2f2f2, #cfcfcf);
    display: inline-block;
}

.check.on {
    background: #a9bedb;
    color: #111;
    font: 700 12px/10px "DejaVu Sans", sans-serif;
    text-align: center;
    border-color: #5e6f88;
}

.head-row1 .check.on {
    margin: 2px 6px 0 15px;
}

.field {
    height: 15px;
    flex: 1;
    min-width: 0;
    background: #cfcfcf;
    border: 1px solid #8a8a8a;
    border-top-color: #6e6e6e;
    border-bottom-color: #a2a2a2;
    line-height: 13px;
    padding-left: 2px;
    white-space: nowrap;
    overflow: hidden;
}

.name {
    background: #dbdbdb;
}

.static-check {
    margin: 3px 5px 0 4px;
}

.static {
    margin-top: 1px;
}

.head-row1 .tri-d.dark {
    margin-top: 5px;
}

.head-row2 {
    display: flex;
    align-items: center;
    height: 14px;
    padding-left: 34px;
}

.tag-label {
    width: 26px;
}

.pop {
    height: 14px;
    flex: 1;
    background: linear-gradient(#f0f0f0, #c4c4c4);
    border: 1px solid #848484;
    border-radius: 3px;
    font-size: 10px;
    line-height: 12px;
    letter-spacing: 0;
    padding-left: 5px;
    position: relative;
}

.pop::after {
    content: "";
    position: absolute;
    right: 5px;
    top: 2px;
    width: 5px;
    height: 8px;
    background:
        linear-gradient(135deg, transparent 50%, #222 50%) 0 0 / 2.500px 3px no-repeat,
        linear-gradient(225deg, transparent 50%, #222 50%) 2.500px 0 / 2.500px 3px no-repeat,
        linear-gradient(45deg, transparent 50%, #222 50%) 0 5px / 2.500px 3px no-repeat,
        linear-gradient(315deg, transparent 50%, #222 50%) 2.500px 5px / 2.500px 3px no-repeat;
}

.tag-pop {
    flex: none;
    width: 223px;
}

.layer-label {
    margin-left: 7px;
    width: 39px;
}

.layer-pop {
    flex: none;
    width: 211px;
}

.comp-title {
    height: 20px;
    display: flex;
    align-items: center;
    padding: 1px 0 0 4px;
    border-top: 1px solid #8c8c8c;
    flex-shrink: 0;
}

.comp-title b {
    letter-spacing: .55px;
}

.comp-title .book {
    margin-left: auto;
}

.comp-title .gear {
    margin: 0 2px 0 5px;
}

.comp-ico {
    margin: 0 16px 0 4px;
}

.rt-top {
    height: 64px;
    display: flex;
    justify-content: space-between;
    padding-right: 4px;
    flex-shrink: 0;
}

.anchor {
    display: flex;
}

.anchor-middle {
    writing-mode: vertical-rl;
    transform: rotate(180deg);
    width: 14px;
    height: 50px;
    margin: 14px -1px 0 1px;
    text-align: center;
    font-size: 10px;
    letter-spacing: 0;
}

.anchor-col {
    width: 48px;
}

.anchor-center {
    height: 14px;
    text-align: center;
    font-size: 10px;
    letter-spacing: 0;
    line-height: 14px;
    padding-left: 2px;
}

.anchor-box {
    width: 48px;
    height: 49px;
    background: #d2d2d2;
    border: 1px solid #8a8a8a;
}

.anchor-box svg {
    display: block;
}

.rt-grid {
    width: 324px;
    display: grid;
    grid-template-columns: repeat(3, 106px);
    grid-template-rows: repeat(4, 15px);
    column-gap: 3px;
    row-gap: 1px;
    align-items: center;
}

.rt-grid span {
    padding-left: 2px;
}

.rt-btns {
    width: 51px;
    height: 17px;
    justify-self: end;
    margin-top: -2px;
    border-color: #6a6a6a;
    border-radius: 3px;
}

.rt-btn {
    flex: 1;
    border: 0;
    border-right: 1px solid #6a6a6a;
    background: none;
    display: flex;
    align-items: center;
    justify-content: center;
}

.rt-btn:last-child {
    border-right: 0;
}

.prop {
    height: 18px;
    display: grid;
    grid-template-columns: 205px 1fr;
    align-items: center;
    padding: 0 3px 0 14px;
    flex-shrink: 0;
}

.prop.gap {
    margin-top: 8px;
}

.prop.nested .prop-label {
    padding-left: 15px;
}

.prop .check {
    margin-left: 1px;
}

.prop-label {
    white-space: nowrap;
}

.foldable .prop-label {
    display: flex;
    align-items: center;
}

.foldable .tri-r {
    margin-left: -12px;
    margin-right: 4px;
}

.vec {
    display: grid;
    grid-template-columns: repeat(3, 106px);
    column-gap: 3px;
    margin-left: -2px;
}

.axis {
    display: flex;
    align-items: center;
}

.axis span {
    width: 13px;
    padding-left: 2px;
    color: #444;
}

.slider-title {
    height: 18px;
    margin-top: 3px;
}

.script-ico {
    margin: 0 4px 0 4px;
}

.slider-title .check {
    margin-right: 3px;
}

.obj {
    display: flex;
    align-items: center;
}

.obj > svg {
    margin-left: 8px;
    margin-right: 1px;
    flex-shrink: 0;
}

.obj > svg.dropper {
    margin-left: 3px;
    margin-right: 0;
}

.swatch {
    flex: 1;
    height: 15px;
    border: 1px solid #6e6e6e;
}

.swatch.white {
    background: #fff;
}

.swatch.pressed {
    background: linear-gradient(#fff, #fff) bottom / 100% 2px no-repeat #c8c8c8;
}

.swatch.disabled {
    background:
        linear-gradient(90deg, #fff 0 50%, #000 50% 100%) bottom / 100% 3px no-repeat #c8c8c8;
}

.help-box {
    height: 36px;
    margin: 4px 3px 4px 28px;
    background: #cdcdcd;
    border: 1px solid #9a9a9a;
    border-radius: 3px;
    display: flex;
    align-items: center;
    padding-left: 10px;
    gap: 7px;
    font-size: 9px;
    letter-spacing: .46px;
    color: #333;
    flex-shrink: 0;
}

.slider-wrap {
    display: flex;
    align-items: center;
    gap: 5px;
}

.field.num {
    flex: none;
    width: 50px;
}

.prop.visualize {
    height: 28px;
    align-items: start;
    padding-top: 4px;
}

.btn-plain {
    height: 15px;
    background: linear-gradient(#f0f0f0, #c2c2c2);
    border: 1px solid #7e7e7e;
    border-radius: 3px;
    font-size: 10px;
    letter-spacing: .3px;
}

.with-ico {
    display: flex;
    align-items: center;
}

.event-box {
    margin: 18px 4px 0 14px;
    border: 1px solid #a8a8a8;
    border-bottom: 2px solid #8a8a8a;
    border-radius: 3px 3px 0 0;
    flex-shrink: 0;
}

.event-head {
    height: 15px;
    background: #dedede;
    border-bottom: 1px solid #a0a0a0;
    padding-left: 6px;
    line-height: 15px;
}

.event-body {
    height: 48px;
    background: #e4e4e4;
    padding: 5px 0 0 6px;
    line-height: 14px;
}

.event-foot {
    width: 55px;
    height: 15px;
    margin: 0 4px 0 auto;
    background: #e2e2e2;
    border: 1px solid #a8a8a8;
    border-top: 0;
    border-radius: 0 0 3px 3px;
    display: flex;
    align-items: center;
    justify-content: space-around;
    font-size: 14px;
    font-weight: 700;
    line-height: 12px;
    padding: 0 8px 0 4px;
    flex-shrink: 0;
}

.minus {
    color: #999;
}

.add-wrap {
    margin-top: 1px;
    border-top: 1px solid #8c8c8c;
    padding: 9px 0 0 154px;
    flex-shrink: 0;
}

.add-comp {
    width: 230px;
    height: 23px;
    background: linear-gradient(#f2f2f2, #bdbdbd);
    border: 1px solid #5a5a5a;
    border-radius: 3px;
    font-size: 12px;
    letter-spacing: .3px;
    color: #222;
}

.intercepted {
    margin-top: auto;
    height: 16px;
    background: linear-gradient(#4e4e4e, #777);
    display: flex;
    align-items: center;
    padding: 0 7px 0 4px;
    color: #ddd;
    flex-shrink: 0;
}

.intercepted b {
    letter-spacing: .3px;
}

.rule {
    flex: 1;
    height: 5px;
    margin-left: 4px;
    border-top: 1px solid #bbb;
    border-bottom: 1px solid #bbb;
}

/* status + taskbar */
.statusbar {
    height: 22px;
    background: #a2a2a2;
    border-top: 1px solid #666;
    display: flex;
    align-items: center;
    gap: 3px;
    padding: 1px 0 0 3px;
    letter-spacing: .15px;
}

.taskbar {
    height: 40px;
    background: #0a0a0a;
    display: flex;
    align-items: stretch;
    letter-spacing: 0;
}

.tb-app {
    width: 49px;
    display: flex;
    align-items: center;
    justify-content: center;
}

.tb-app.start {
    width: 50px;
    padding-right: 2px;
}

.tb-app.on {
    background: linear-gradient(#a85a5a, #a85a5a) center bottom / 40px 2px no-repeat;
}

.unity-dark {
    color: #0a0a0a;
}

.unity-dark svg {
    filter: invert(1);
}

.epic {
    width: 20px;
    height: 24px;
    background: #111;
    color: #fff;
    font: 700 9px/11px "Liberation Sans", sans-serif;
    letter-spacing: -.3px;
    text-align: center;
    padding-top: 2px;
}

.epic small {
    display: block;
    font-size: 4px;
    line-height: 6px;
    letter-spacing: 0;
}

.unity-tile {
    width: 20px;
    height: 20px;
    background: #fff;
    color: #222;
    display: flex;
    align-items: center;
    justify-content: center;
}

.tray {
    margin-left: auto;
    display: flex;
    align-items: center;
    color: #fff;
    font-family: "Noto Sans", sans-serif;
    font-size: 12px;
    width: 221px;
}

.tray-up {
    width: 24px;
    height: 40px;
    background: #222;
    display: flex;
    align-items: center;
    justify-content: center;
}

.tray-net {
    margin-left: 4px;
}

.tray-vol {
    margin-left: 8px;
}

.tray-pen {
    margin-left: 12px;
}

.clock {
    width: 84px;
    display: flex;
    flex-direction: column;
    align-items: center;
    line-height: 18px;
}

.show-desktop {
    width: 1px;
    height: 40px;
    background: #555;
    margin-left: 21px;
}
```
